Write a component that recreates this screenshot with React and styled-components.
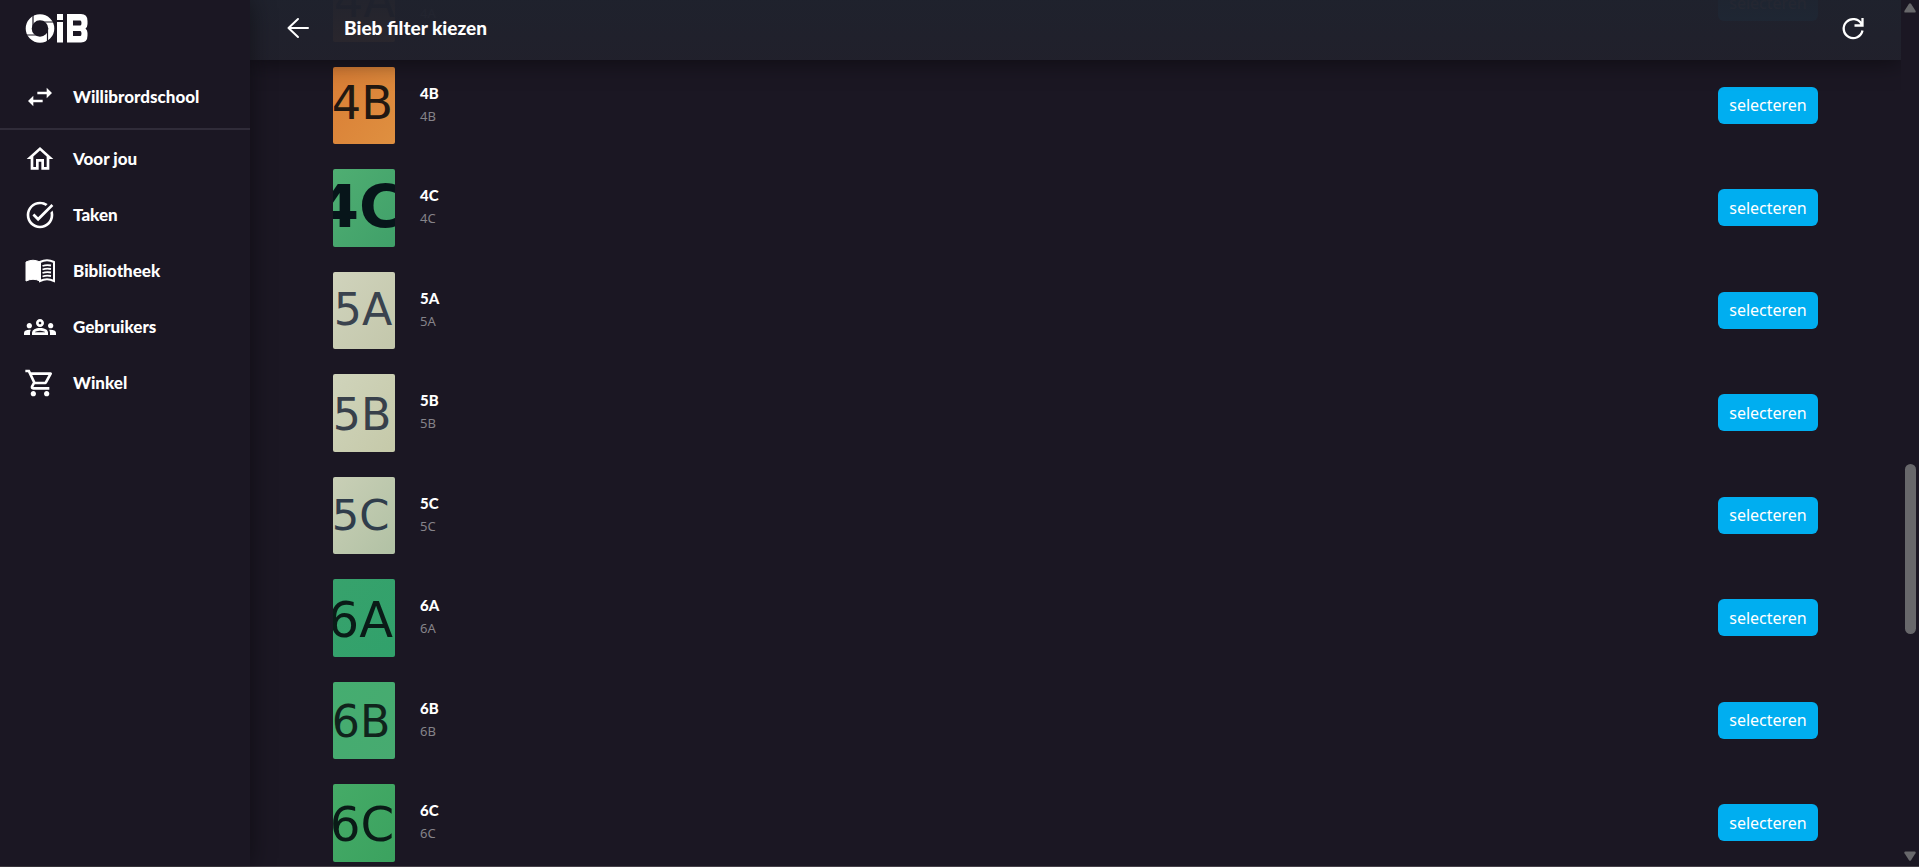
import React from 'react';
import styled, { createGlobalStyle } from 'styled-components';
import {
  MdSwapHoriz, MdOutlineHome, MdTaskAlt, MdOutlineGroups, MdOutlineShoppingCart,
} from 'react-icons/md';

const Global = createGlobalStyle`
  *, *::before, *::after { box-sizing: border-box; }
  html, body, #root { height: 100%; }
  body {
    margin: 0;
    background: #1b1723;
    color: #fff;
    font-family: "Noto Sans", "Open Sans", sans-serif;
    overflow: hidden;
  }
`;

const Shell = styled.div`
  display: flex;
  height: 100vh;
  border-bottom: 1px solid #454048;
`;

const Sidebar = styled.aside`
  position: relative;
  z-index: 3;
  flex: 0 0 250px;
  background: #1b1723;
  box-shadow: 0 0 24px rgba(0, 0, 0, 0.45);
`;

const LogoLink = styled.a`
  display: flex;
  height: 56px;
  padding: 13px 25px;
  color: #fff;
  svg { display: block; }
`;

const NavList = styled.ul`
  list-style: none;
  margin: 0;
  padding: 0;
`;

const School = styled.div`
  height: 74px;
  padding-top: 12px;
  border-bottom: 2px solid #302c39;
`;

const NavLink = styled.a`
  display: flex;
  align-items: center;
  gap: 17px;
  height: 56px;
  padding: 2px 0 0 24px;
  color: #fff;
  font: 900 17px/20px Lato, "Noto Sans", sans-serif;
  text-decoration: none;
  white-space: nowrap;
  svg { flex: none; width: 32px; height: 32px; }
`;

const Main = styled.main`
  flex: 1;
  min-width: 0;
  overflow: hidden;
`;

const Header = styled.header`
  position: relative;
  z-index: 2;
  display: flex;
  align-items: center;
  height: 60px;
  padding: 0 34px 4px;
  background: linear-gradient(#1f222dfa, #21212cf0);
  box-shadow: 0 2px 24px rgba(0, 0, 0, 0.5);
`;

const IconButton = styled.button`
  display: flex;
  padding: 0;
  border: 0;
  background: none;
  color: #fff;
  cursor: pointer;
  svg { display: block; width: 28px; height: 28px; }
`;

const Title = styled.h1`
  flex: 1;
  margin: 0;
  padding-left: 32px;
  font: 900 19px/24px Lato, "Noto Sans", sans-serif;
`;

const List = styled.ul`
  display: flex;
  flex-direction: column;
  gap: 25px;
  list-style: none;
  margin: -96px 0 0;
  padding: 0 83px;
`;

const Row = styled.li`
  display: flex;
  align-items: center;
`;

const Cover = styled.svg`
  flex: none;
  width: 62px;
  aspect-ratio: 4 / 5;
  border-radius: 2px;
`;

const Info = styled.div`
  flex: 1;
  padding: 0 0 3px 25px;
`;

const Name = styled.div`
  font: 900 15px/24px Lato, "Noto Sans", sans-serif;
`;

const Sub = styled.div`
  color: #858389;
  font: 400 13px/22px "Noto Sans", sans-serif;
`;

const Select = styled.button`
  min-width: 100px;
  height: 37px;
  padding: 0 10px;
  border: 0;
  border-radius: 6px;
  background: #00aef0;
  color: #fff;
  font: 400 16px/24px "Noto Sans", sans-serif;
  cursor: pointer;
`;

const Track = styled.div`
  display: flex;
  flex-direction: column;
  align-items: center;
  flex: 0 0 18px;
  padding: 3px 0 5px 0;
  svg { flex: none; display: block; }
`;

const Space = styled.div`
  flex: ${(p) => p.$grow} 1 0;
`;

const Thumb = styled.div`
  flex: 170 1 0;
  width: 11px;
  border-radius: 6px;
  background: #68686b;
`;

const Logo = () => (
  <svg width="64" height="30" viewBox="0 0 64 30" fill="currentColor" role="img" aria-label="OiB">
    <circle cx="15" cy="15.500" r="11.300" fill="none" stroke="currentColor" strokeWidth="6" />
    <path d="M8 0v15M30 9H15M22.500 31V15M0 22h15" stroke="#1b1723" strokeWidth="1.200" />
    <rect x="32" y="1" width="6" height="6" />
    <rect x="32" y="9" width="6" height="20.500" />
    <path fillRule="evenodd" d="M42 1h14q6.500 0 6.500 7v3q0 3-2 4.500q2 1.500 2 4.500v2.500q0 7-6.500 7H42zM48 7.500v5h7.500q1-.5 1-2.500t-1-2.500zM48 18v5h7.500q1-.5 1-2.500t-1-2.500z" />
  </svg>
);

const BackArrow = () => (
  <svg viewBox="0 0 28 28" fill="none" stroke="currentColor" strokeWidth="2" strokeLinecap="round" strokeLinejoin="round">
    <path d="M24 14H4.500M14 5l-9.500 9 9.500 9" />
  </svg>
);

const RefreshIcon = () => (
  <svg viewBox="0 0 28 28" fill="none" stroke="currentColor" strokeWidth="2.300">
    <path d="M23.500 4v7.500h-8M22.500 10A9.500 9.500 0 1 0 23.500 16.500" />
  </svg>
);

const BookIcon = () => (
  <svg viewBox="0 0 32 32" fill="none" stroke="currentColor">
    <path d="M2 7q7-3.500 14 0v19q-7-3.500-14 0z" fill="currentColor" strokeWidth="1" />
    <path d="M16 7q7-3.500 14 0v19q-7-3.500-14 0z" strokeWidth="2" />
    <path d="M18.500 11q4-1.500 8.500-.5M18.500 14.500q4-1.500 8.500-.5M18.500 18q4-1.500 8.500-.5M18.500 21.500q4-1.500 8.500-.5" strokeWidth="1.800" />
  </svg>
);

const nav = [
  ['Voor jou', MdOutlineHome],
  ['Taken', MdTaskAlt],
  ['Bibliotheek', BookIcon],
  ['Gebruikers', MdOutlineGroups],
  ['Winkel', MdOutlineShoppingCart],
];

const groups = [
  { name: '4A', from: '#d87c38', to: '#df9143', ink: '#211812', size: 46, x: 1, y: 53 },
  { name: '4B', from: '#d97d35', to: '#df9040', ink: '#211812', size: 46, x: -1, y: 52 },
  { name: '4C', from: '#4fae72', to: '#40a069', ink: '#07151a', size: 59, x: -15, y: 58, weight: 700 },
  { name: '5A', from: '#d0d3bc', to: '#c3c7ab', ink: '#3a434e', size: 44, x: 1, y: 53 },
  { name: '5B', from: '#d0d4bb', to: '#c5c9a9', ink: '#38404a', size: 44, x: 0, y: 56 },
  { name: '5C', from: '#c9cfb6', to: '#b1c1a4', ink: '#303d4b', size: 43, x: -1, y: 53 },
  { name: '6A', from: '#37a26c', to: '#31a16b', ink: '#0a1b17', size: 49, x: -5, y: 58 },
  { name: '6B', from: '#45ad70', to: '#47aa70', ink: '#10241c', size: 44, x: -1, y: 55 },
  { name: '6C', from: '#45ab67', to: '#3ba25f', ink: '#0a1b17', size: 48, x: -3, y: 57 },
];

const GroupRow = ({ g }) => (
  <Row>
    <Cover viewBox="0 0 62 77" preserveAspectRatio="xMidYMid slice" role="img" aria-label={g.name}>
      <defs>
        <linearGradient id={`c${g.name}`} x1="0" y1="0" x2="1" y2="1">
          <stop offset="0" stopColor={g.from} />
          <stop offset="1" stopColor={g.to} />
        </linearGradient>
      </defs>
      <rect width="62" height="78" fill={`url(#c${g.name})`} />
      <text x={g.x} y={g.y} fill={g.ink} fontSize={g.size} fontWeight={g.weight || 400} fontFamily="DejaVu Sans, sans-serif">
        {g.name}
      </text>
    </Cover>
    <Info>
      <Name>{g.name}</Name>
      <Sub>{g.name}</Sub>
    </Info>
    <Select type="button">selecteren</Select>
  </Row>
);

export default function App() {
  return (
    <>
      <Global />
      <Shell>
        <Sidebar>
          <LogoLink href="#"><Logo /></LogoLink>
          <School>
            <NavLink href="#"><MdSwapHoriz />Willibrordschool</NavLink>
          </School>
          <nav>
            <NavList>
              {nav.map(([label, Icon]) => (
                <li key={label}><NavLink href="#"><Icon />{label}</NavLink></li>
              ))}
            </NavList>
          </nav>
        </Sidebar>
        <Main>
          <Header>
            <IconButton type="button" aria-label="Terug"><BackArrow /></IconButton>
            <Title>Bieb filter kiezen</Title>
            <IconButton type="button" aria-label="Vernieuwen"><RefreshIcon /></IconButton>
          </Header>
          <List>
            {groups.map((g) => <GroupRow key={g.name} g={g} />)}
          </List>
        </Main>
        <Track>
          <svg width="12" height="10" viewBox="0 0 12 10" fill="#68686b"><path d="M5 .8q1-1.200 2 0l4.500 7q.7 1.700-1 1.700h-9q-1.700 0-1-1.700z" /></svg>
          <Space $grow={452} />
          <Thumb />
          <Space $grow={217} />
          <svg width="12" height="10" viewBox="0 0 12 10" fill="#68686b"><path d="M5 9.200q1 1.200 2 0l4.500-7q.7-1.700-1-1.700h-9q-1.700 0-1 1.700z" /></svg>
        </Track>
      </Shell>
    </>
  );
}
